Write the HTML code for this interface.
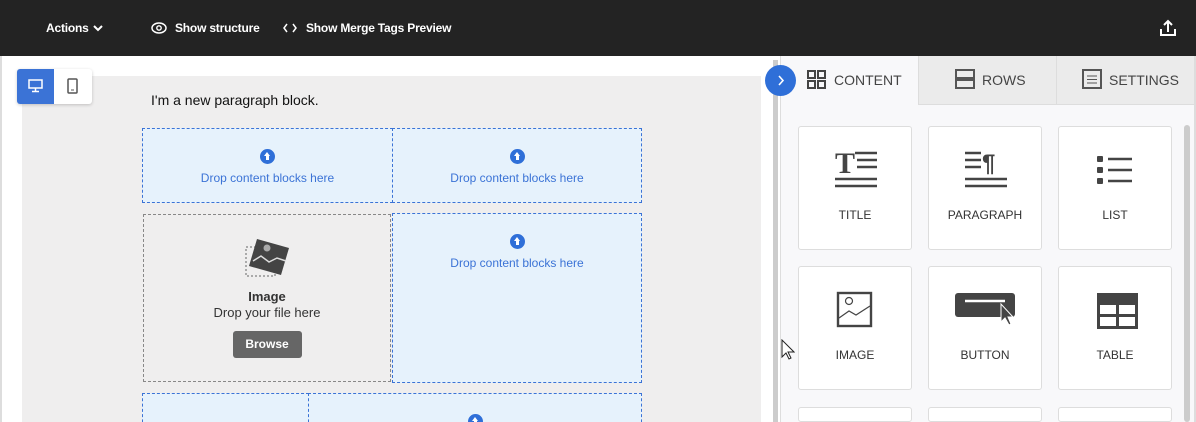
<!DOCTYPE html>
<html style="overflow:hidden;height:422px"><head><style>
*{box-sizing:border-box;margin:0;padding:0}
body{width:1196px;height:422px;overflow:hidden;background:#fff;font-family:"Liberation Sans",sans-serif;position:relative}
.top{position:absolute;left:0;top:0;width:1196px;height:56px;background:#232323;color:#fff;font-size:12px;font-weight:bold}
.top span{position:absolute;top:21px;letter-spacing:-0.2px}
.a{position:absolute}
.drop{position:absolute;background:#e6f2fc;border:1px dashed #3b73d6;color:#3b73d6;font-size:12px;text-align:center}
.up{width:15px;height:15px;border-radius:50%;background:#2f6fd8;margin:0 auto;position:relative}
.up:after{content:"";position:absolute;left:4px;top:3px;border:3.5px solid transparent;border-bottom:4px solid #fff;border-top:0}
.up:before{content:"";position:absolute;left:6px;top:6px;width:3px;height:5px;background:#fff}
.card{position:absolute;width:114px;height:124px;background:#fff;border:1px solid #ddd;border-radius:3px;text-align:center;font-size:12px;color:#333}
.card .l{position:absolute;left:0;right:0;top:81px}
.card svg{position:absolute;left:36px;top:22px}
.tab{position:absolute;top:56px;height:49px;font-size:14px;color:#444}
</style></head><body>
<div class="top">
<span style="left:46px">Actions</span>
<svg class="a" style="left:93px;top:24px" width="10" height="8"><path d="M1 2l4 4 4-4" stroke="#fff" stroke-width="2" fill="none"/></svg>
<svg class="a" style="left:151px;top:22px" width="16" height="12"><ellipse cx="8" cy="6" rx="7" ry="5" stroke="#fff" stroke-width="1.5" fill="none"/><circle cx="8" cy="6" r="2.2" stroke="#fff" stroke-width="1.4" fill="none"/></svg>
<span style="left:175px">Show structure</span>
<svg class="a" style="left:283px;top:23px" width="14" height="10"><path d="M4 1L1 5l3 4M10 1l3 4-3 4" stroke="#fff" stroke-width="1.5" fill="none"/></svg>
<span style="left:306px">Show Merge Tags Preview</span>
<svg class="a" style="left:1160px;top:19px" width="16" height="18"><path d="M8 13V2M4 6l4-4 4 4M1 10v6h14v-6" stroke="#fff" stroke-width="2" fill="none"/></svg>
</div>
<div class="a" style="left:0;top:56px;width:2px;height:366px;background:#ddd"></div>
<div class="a" style="left:22px;top:76px;width:739px;height:346px;background:#efeeee"></div>
<div class="a" style="left:17px;top:69px;width:75px;height:35px;background:#fff;border-radius:3px;box-shadow:0 1px 3px rgba(0,0,0,.2)"></div>
<div class="a" style="left:17px;top:69px;width:37px;height:35px;background:#3b73d6;border-radius:3px 0 0 3px"></div>
<svg class="a" style="left:28px;top:79px" width="15" height="14"><rect x="1" y="1" width="13" height="8" stroke="#fff" stroke-width="1.5" fill="none"/><path d="M7.5 9v3M4 12.5h7" stroke="#fff" stroke-width="1.5"/></svg>
<svg class="a" style="left:67px;top:78px" width="11" height="16"><rect x="1" y="1" width="9" height="14" rx="1" stroke="#555" stroke-width="1.5" fill="none"/><path d="M4 12h3" stroke="#555"/></svg>
<div class="a" style="left:151px;top:92px;font-size:14px;color:#111">I'm a new paragraph block.</div>
<div class="drop" style="left:142px;top:128px;width:251px;height:75px;padding-top:20px"><div class="up"></div><div style="margin-top:7px">Drop content blocks here</div></div>
<div class="drop" style="left:392px;top:128px;width:250px;height:75px;padding-top:20px"><div class="up"></div><div style="margin-top:7px">Drop content blocks here</div></div>
<div class="a" style="left:143px;top:214px;width:248px;height:168px;border:1px dashed #888;text-align:center;color:#333;font-size:13px">
<svg style="margin-top:22px" width="46" height="42"><rect x="2" y="10" width="29" height="29" stroke="#666" stroke-dasharray="2 2" fill="none"/><path d="M13 2l32 9-8 27-32-9z" fill="#444"/><circle cx="23" cy="11" r="3.5" fill="#aaa"/><path d="M9 24l8-5 8 6 8-4 9 3" stroke="#ddd" stroke-width="1.5" fill="none"/></svg>
<div style="font-weight:bold;margin-top:7px;line-height:16px">Image</div><div style="line-height:16px">Drop your file here</div>
<div style="margin:10px auto 0;width:69px;height:27px;background:#666;border-radius:3px;color:#fff;font-weight:bold;font-size:12px;line-height:27px">Browse</div></div>
<div class="drop" style="left:392px;top:213px;width:250px;height:170px;padding-top:20px"><div class="up"></div><div style="margin-top:7px">Drop content blocks here</div></div>
<div class="drop" style="left:142px;top:393px;width:167px;height:40px"></div>
<div class="drop" style="left:308px;top:393px;width:334px;height:40px;padding-top:20px"><div class="up"></div></div>
<div class="a" style="left:773px;top:60px;width:5px;height:362px;background:#ccc"></div>
<div class="a" style="left:780px;top:56px;width:416px;height:366px;background:#f8f8fa;border-left:1px solid #ddd"></div>
<div class="tab" style="left:918px;width:138px;background:#ebebeb;border-left:1px solid #ddd;border-bottom:1px solid #ddd"></div>
<div class="tab" style="left:1056px;width:140px;background:#ebebeb;border-left:1px solid #ddd;border-bottom:1px solid #ddd"></div>
<svg class="a" style="left:807px;top:70px" width="19" height="19"><g stroke="#444" stroke-width="2" fill="none"><rect x="1" y="1" width="7" height="7"/><rect x="11" y="1" width="7" height="7"/><rect x="1" y="11" width="7" height="7"/><rect x="11" y="11" width="7" height="7"/></g></svg>
<div class="tab" style="left:834px;line-height:49px">CONTENT</div>
<svg class="a" style="left:955px;top:69px" width="20" height="20"><g stroke="#555" stroke-width="2" fill="none"><rect x="1" y="1" width="18" height="8"/><rect x="1" y="11" width="18" height="8"/></g></svg>
<div class="tab" style="left:982px;line-height:49px">ROWS</div>
<svg class="a" style="left:1082px;top:69px" width="20" height="20"><rect x="1" y="1" width="18" height="18" stroke="#555" stroke-width="2" fill="none"/><path d="M5 7h10M5 10.5h10M5 14h10" stroke="#555"/></svg>
<div class="tab" style="left:1109px;line-height:49px">SETTINGS</div>
<div class="a" style="left:765px;top:65px;width:31px;height:31px;border-radius:50%;background:#2f6fd8"></div>
<svg class="a" style="left:776px;top:74px" width="10" height="13"><path d="M3 2l4 4.5L3 11" stroke="#fff" stroke-width="1.6" fill="none"/></svg>
<div class="a" style="left:1184px;top:125px;width:6px;height:297px;background:#ccc;border-radius:3px"></div>
<div class="card" style="left:798px;top:126px"><svg width="44" height="42"><text x="0" y="24" font-family="Liberation Serif" font-weight="bold" font-size="30" fill="#444">T</text><path d="M20 4h22M22 11h20M22 18h20M0 30h42M0 37h42" stroke="#444" stroke-width="2.4"/></svg><div class="l">TITLE</div></div>
<div class="card" style="left:928px;top:126px"><svg width="44" height="42"><path d="M0 4h16M0 11h16M0 18h16M0 30h42M0 37h42" stroke="#444" stroke-width="2.4"/><text x="17" y="22" font-family="Liberation Sans" font-weight="bold" font-size="24" fill="#444">¶</text></svg><div class="l">PARAGRAPH</div></div>
<div class="card" style="left:1058px;top:126px"><svg width="44" height="42"><g fill="#444"><rect x="2" y="7" width="6" height="6" rx="1"/><rect x="2" y="18" width="6" height="6" rx="1"/><rect x="2" y="29" width="6" height="6" rx="1"/></g><path d="M13 10h24M13 21h24M13 32h24" stroke="#444" stroke-width="2.6"/></svg><div class="l">LIST</div></div>
<div class="card" style="left:798px;top:266px"><svg width="44" height="40"><rect x="3" y="4" width="33" height="33" stroke="#444" stroke-width="2.4" fill="none"/><circle cx="14" cy="12" r="3.5" stroke="#444" stroke-width="1.2" fill="none"/><path d="M4 29l10-7 7 4 14-9" stroke="#444" stroke-width="1.2" fill="none"/></svg><div class="l">IMAGE</div></div>
<div class="card" style="left:928px;top:266px"><svg width="64" height="40" style="left:26px"><rect x="0" y="4" width="60" height="24" rx="3" fill="#444"/><path d="M10 12h40" stroke="#fff" stroke-width="2.4"/><path d="M46 15v18l4-4 4 7 2-1-3-7h5z" fill="#444" stroke="#fff" stroke-width="1"/></svg><div class="l">BUTTON</div></div>
<div class="card" style="left:1058px;top:266px"><svg width="44" height="40"><rect x="2" y="4" width="41" height="36" fill="#444"/><g fill="#fff"><rect x="5" y="16" width="16" height="9"/><rect x="24" y="16" width="16" height="9"/><rect x="5" y="28" width="16" height="9"/><rect x="24" y="28" width="16" height="9"/></g></svg><div class="l">TABLE</div></div>
<div class="card" style="left:798px;top:407px;height:15px"></div>
<div class="card" style="left:928px;top:407px;height:15px"></div>
<div class="card" style="left:1058px;top:407px;height:15px"></div>
<svg class="a" style="left:781px;top:339px" width="14" height="22"><path d="M1 1v17l4-4 3 6 2-1-3-6h6z" fill="#fff" stroke="#222"/></svg>
<div class="a" style="left:1194px;top:56px;width:2px;height:366px;background:#ddd"></div>
</body></html>
